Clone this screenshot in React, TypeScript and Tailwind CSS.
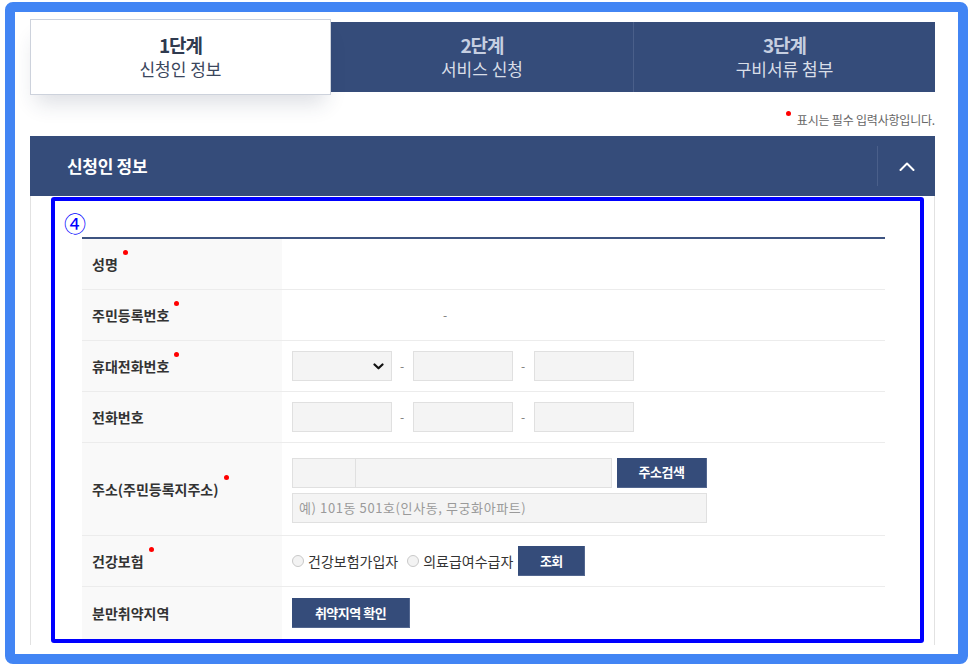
import React from "react";

const NAVY = "bg-[#354c7a]";

function Dot() {
  return <span className="inline-block w-[5px] h-[5px] rounded-full bg-[#ff0000] ml-[5px] mt-[-4px] shrink-0" />;
}

function Label({ text, req }: { text: string; req?: boolean }) {
  return (
    <div className="w-[200px] shrink-0 bg-[#f9f9f9] pl-[10px] flex items-center">
      <span className="flex items-start">
        <span className="text-[14px] leading-[20px] font-bold text-[#333]">{text}</span>
        {req && <Dot />}
      </span>
    </div>
  );
}

function Row({ children, h = "h-[51px]", last }: { children: React.ReactNode; h?: string; last?: boolean }) {
  return <div className={`flex ${h} ${last ? "" : "border-b border-[#ececec]"}`}>{children}</div>;
}

function Box({ w }: { w: string }) {
  return <div className={`${w} h-[30px] bg-[#f4f4f4] border border-[#e0e0e0]`} />;
}

function Dash() {
  return <span className="ml-[8px] mr-[7px] w-[6px] text-[12px] text-[#777] leading-none">-</span>;
}

function Btn({ w, text }: { w: string; text: string }) {
  return (
    <div className={`${w} h-[30px] ${NAVY} border-b border-r border-[#52668f] flex items-center justify-center text-white text-[13px] font-bold tracking-[-0.5px]`}>
      {text}
    </div>
  );
}

function Radio({ text }: { text: string }) {
  return (
    <div className="flex items-center">
      <span className="w-[12px] h-[12px] rounded-full border border-[#c9c9c9] bg-[#f3f3f3]" />
      <span className="ml-[4px] text-[14px] text-[#333] leading-[20px]">{text}</span>
    </div>
  );
}

export default function App() {
  return (
    <div className="w-[972px] h-[665px] bg-white pt-[2px] pl-[5px] font-['Noto_Sans_CJK_KR','Noto_Sans',sans-serif] overflow-hidden">
      <div className="w-[963px] h-[662px] border-[10px] border-[#4285f4] rounded-[8px] bg-white pl-[15px] pt-[7px]">
        <div className="w-[905px]">
          {/* Tabs */}
          <div className="flex items-center h-[76px]">
            <div className="w-[301px] h-[76px] shrink-0 bg-white border border-[#cdd2dc] shadow-[0_14px_20px_-6px_rgba(40,50,80,0.16)] flex flex-col items-center justify-center relative z-10">
              <div className="text-[19px] leading-[24px] font-bold text-[#2f3a4f] tracking-[-1px]">1단계</div>
              <div className="text-[17px] leading-[24px] text-[#3a465c]">신청인 정보</div>
            </div>
            <div className={`flex-1 h-[70px] ${NAVY} flex`}>
              <div className="w-[302px] flex flex-col items-center justify-center">
                <div className="text-[19px] leading-[24px] font-bold text-[#c6cfe1] tracking-[-1px]">2단계</div>
                <div className="text-[17px] leading-[24px] text-[#d9dee8]">서비스 신청</div>
              </div>
              <div className="flex-1 border-l border-[#4a5f8a] flex flex-col items-center justify-center">
                <div className="text-[19px] leading-[24px] font-bold text-[#c6cfe1] tracking-[-1px]">3단계</div>
                <div className="text-[17px] leading-[24px] text-[#d9dee8]">구비서류 첨부</div>
              </div>
            </div>
          </div>

          {/* Required note */}
          <div className="h-[41px] flex justify-end items-end pb-[8px]">
            <span className="flex items-start">
              <span className="w-[5px] h-[5px] rounded-full bg-[#ff0000] mr-[6px] mt-[-1px]" />
              <span className="text-[12px] leading-[16px] text-[#666] tracking-[-0.2px]">표시는 필수 입력사항입니다.</span>
            </span>
          </div>

          {/* Section header */}
          <div className={`h-[60px] ${NAVY} flex items-center justify-between pl-[37px]`}>
            <span className="text-[17px] font-bold text-white tracking-[-0.3px]">신청인 정보</span>
            <div className="w-[58px] h-[40px] border-l border-[#4a5f8a] flex items-center justify-center">
              <svg width="16" height="9" viewBox="0 0 16 9" fill="none">
                <polyline points="1.5,8 8,1.5 14.5,8" stroke="white" strokeWidth="2" strokeLinecap="round" strokeLinejoin="round" />
              </svg>
            </div>
          </div>

          {/* Section body */}
          <div className="relative h-[449px] border-x border-[#e2e2e2] pt-[41px] pl-[51px]">
            <div className="w-[803px] border-t-2 border-[#3e5481]">
              <Row>
                <Label text="성명" req />
                <div className="flex-1" />
              </Row>
              <Row>
                <Label text="주민등록번호" req />
                <div className="flex-1 flex items-center pl-[161px]">
                  <span className="text-[12px] text-[#777]">-</span>
                </div>
              </Row>
              <Row>
                <Label text="휴대전화번호" req />
                <div className="flex-1 flex items-center pl-[10px]">
                  <div className="w-[100px] h-[30px] bg-[#f4f4f4] border border-[#e0e0e0] flex items-center justify-end pr-[7px]">
                    <svg width="11" height="7" viewBox="0 0 11 7" fill="none">
                      <polyline points="1.5,1.5 5.5,5.3 9.5,1.5" stroke="#111" strokeWidth="2.2" strokeLinecap="round" strokeLinejoin="round" />
                    </svg>
                  </div>
                  <Dash />
                  <Box w="w-[100px]" />
                  <Dash />
                  <Box w="w-[100px]" />
                </div>
              </Row>
              <Row>
                <Label text="전화번호" />
                <div className="flex-1 flex items-center pl-[10px]">
                  <Box w="w-[100px]" />
                  <Dash />
                  <Box w="w-[100px]" />
                  <Dash />
                  <Box w="w-[100px]" />
                </div>
              </Row>
              <Row h="h-[93px]">
                <Label text="주소(주민등록지주소)" req />
                <div className="flex-1 flex flex-col justify-center pl-[10px] gap-[5px] pt-[2px]">
                  <div className="flex items-center">
                    <Box w="w-[64px]" />
                    <div className="w-[256px] h-[30px] bg-[#f4f4f4] border border-l-0 border-[#e0e0e0]" />
                    <span className="w-[5px]" />
                    <Btn w="w-[90px]" text="주소검색" />
                  </div>
                  <div className="w-[415px] h-[30px] bg-[#f4f4f4] border border-[#e0e0e0] flex items-center pl-[6px]">
                    <span className="text-[13px] text-[#9a9a9a] leading-none tracking-[0.6px]">예) 101동 501호(인사동, 무궁화아파트)</span>
                  </div>
                </div>
              </Row>
              <Row>
                <Label text="건강보험" req />
                <div className="flex-1 flex items-center pl-[10px]">
                  <Radio text="건강보험가입자" />
                  <span className="w-[9px]" />
                  <Radio text="의료급여수급자" />
                  <span className="w-[5px]" />
                  <Btn w="w-[67px]" text="조회" />
                </div>
              </Row>
              <Row h="h-[52px]" last>
                <Label text="분만취약지역" />
                <div className="flex-1 flex items-center pl-[10px]">
                  <Btn w="w-[118px]" text="취약지역 확인" />
                </div>
              </Row>
            </div>

            {/* Annotation overlay */}
            <div className="absolute left-[20px] top-px w-[873px] h-[446px] border-[4px] border-[#0000ff] rounded-[3px] pointer-events-none">
              <span className="absolute left-[9px] top-[10px] text-[22px] leading-none text-[#0000ff]">④</span>
            </div>
          </div>
        </div>
      </div>
    </div>
  );
}
